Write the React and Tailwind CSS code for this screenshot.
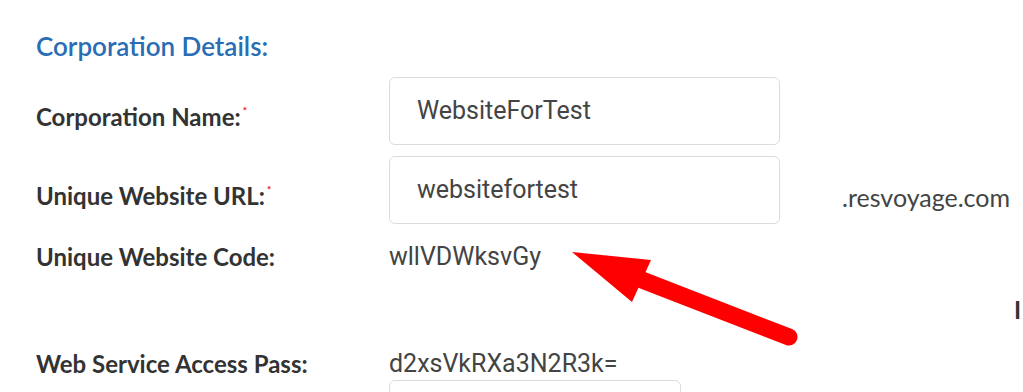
import React from 'react';

function Label({ children, required }) {
  return (
    <div className="w-[389px] shrink-0 pl-[36px] text-[24px] font-bold text-[#333] font-['Lato',sans-serif] leading-none">
      {children}
      {required && <span className="relative -top-[12px] ml-[2px] text-[10px] text-[#e00]">*</span>}
    </div>
  );
}

function Field({ value }) {
  return (
    <div className="flex h-[68px] w-[391px] items-center rounded-[6px] border border-[#dcdcdc] bg-white pl-[27px] text-[25px] text-[#444] font-['Roboto',sans-serif]">
      {value}
    </div>
  );
}

export default function App() {
  return (
    <div className="relative h-[392px] w-[1023px] overflow-hidden bg-white">
      <h2 className="pl-[36px] pt-[31px] text-[26px] font-semibold leading-[30px] text-[#2a6db5] font-['Lato',sans-serif]">
        Corporation Details:
      </h2>

      <div className="mt-[16px] flex items-center">
        <div className="pt-[12px]"><Label required>Corporation Name:</Label></div>
        <Field value="WebsiteForTest" />
      </div>

      <div className="mt-[11px] flex items-center">
        <div className="pt-[12px]"><Label required>Unique Website URL:</Label></div>
        <Field value="websitefortest" />
        <div className="ml-[62px] pt-[14px] text-[25px] leading-none text-[#444] font-['Lato',sans-serif]">.resvoyage.com</div>
      </div>

      <div className="mt-[20px] flex items-center">
        <Label>Unique Website Code:</Label>
        <div className="text-[25px] leading-none text-[#444] font-['Roboto',sans-serif]">wllVDWksvGy</div>
      </div>

      <div className="mt-[29px] pl-[1014px] text-[24px] font-bold leading-none text-[#333] font-['Lato',sans-serif]">
        I
      </div>

      <div className="mt-[29px] flex items-center">
        <Label>Web Service Access Pass:</Label>
        <div className="text-[25px] leading-none text-[#444] font-['Roboto',sans-serif]">d2xsVkRXa3N2R3k=</div>
      </div>

      <div className="ml-[389px] mt-[4px] h-[40px] w-[292px] rounded-[6px] border border-[#dcdcdc]" />

      <svg className="absolute left-0 top-0" width="1023" height="392" viewBox="0 0 1023 392">
        <line x1="642" y1="280" x2="789" y2="337" stroke="#ff0000" strokeWidth="17" strokeLinecap="round" />
        <polygon points="572,252 651,260 632,302" fill="#ff0000" />
      </svg>
    </div>
  );
}
